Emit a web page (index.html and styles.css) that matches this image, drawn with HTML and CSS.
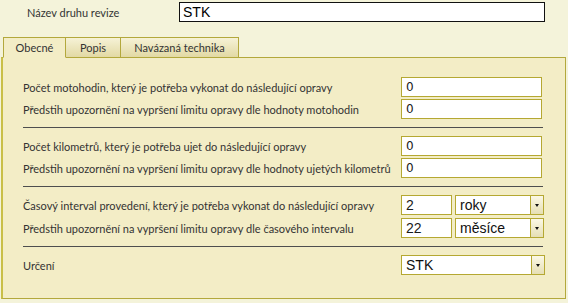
FILE: index.html
```html
<!DOCTYPE html>
<html lang="cs">
<head>
<meta charset="utf-8">
<link rel="stylesheet" href="styles.css">
</head>
<body>
<div class="header">
  <span class="header-label">Název druhu revize</span>
  <div class="name-input">STK</div>
</div>
<div class="tabs">
  <div class="tab active t1">Obecné</div>
  <div class="tab t2">Popis</div>
  <div class="tab t3">Navázaná technika</div>
</div>
<div class="panel">
  <div class="group g1">
    <div class="row"><span class="label">Počet motohodin, který je potřeba vykonat do následující opravy</span><div class="field num">0</div></div>
    <div class="row"><span class="label">Předstih upozornění na vypršení limitu opravy dle hodnoty motohodin</span><div class="field num">0</div></div>
  </div>
  <div class="sep"></div>
  <div class="group g2">
    <div class="row"><span class="label">Počet kilometrů, který je potřeba ujet do následující opravy</span><div class="field num">0</div></div>
    <div class="row"><span class="label">Předstih upozornění na vypršení limitu opravy dle hodnoty ujetých kilometrů</span><div class="field num">0</div></div>
  </div>
  <div class="sep"></div>
  <div class="group g3">
    <div class="row"><span class="label">Časový interval provedení, který je potřeba vykonat do následující opravy</span>
      <div class="pair"><div class="field small">2</div><div class="select unit"><span class="val">roky</span><span class="btn"><i></i></span></div></div></div>
    <div class="row"><span class="label">Předstih upozornění na vypršení limitu opravy dle časového intervalu</span>
      <div class="pair"><div class="field small">22</div><div class="select unit"><span class="val">měsíce</span><span class="btn"><i></i></span></div></div></div>
  </div>
  <div class="sep"></div>
  <div class="group g4">
    <div class="row"><span class="label">Určení</span><div class="select wide"><span class="val">STK</span><span class="btn"><i></i></span></div></div>
  </div>
</div>
</body>
</html>
```
FILE: styles.css
```css
html, body { margin: 0; padding: 0; }
body {
  width: 568px; height: 303px; overflow: hidden;
  background: #f4f3da;
  font-family: Lato, "Open Sans", sans-serif;
  font-size: 11px;
  color: #333;
}
.header { display: flex; align-items: center; height: 20px; padding-top: 2px; }
.header-label { width: 152px; padding-left: 27px; }
.name-input {
  box-sizing: border-box; width: 366px; height: 20px;
  border: 1px solid #111; background: #fff;
  font-family: "Liberation Sans", Arial, sans-serif; font-size: 14px;
  line-height: 18px; padding-left: 3px; color: #000;
}
.tabs { display: flex; margin-top: 15px; padding-left: 3px; height: 21px; }
.tab {
  box-sizing: border-box; height: 21px; line-height: 20px; text-align: center;
  border: 1px solid #b3a83c; border-left: none; border-bottom: 1px solid #b3a83c;
  background: linear-gradient(#f6f2d6, #e2d9a4);
  color: #333;
}
.t1 { width: 63px; border-left: 1px solid #b3a83c; }
.t2 { width: 55px; }
.t3 { width: 118px; }
.tab.active { background: #f3edc6; border-bottom: 1px solid #f3edc6; position: relative; z-index: 1; }
.panel {
  box-sizing: border-box; margin-left: 1px; width: 565px; height: 242px;
  margin-top: -1px;
  border: 1px solid #b3a83c; border-left: 2px solid #c9bf48;
  background: #f3edc6;
  padding: 19px 0 0 20px;
}
.row { display: flex; align-items: center; height: 20px; }
.row + .row { margin-top: 2px; }
.g3 .row + .row { margin-top: 3px; }
.label { width: 378px; white-space: nowrap; }
.sep { width: 520px; height: 0; border-top: 1px solid #4e4e4e; margin: 8px 0 8px; }
.g3 { margin-top: 3px; }
.g4 { margin-top: 4px; }
.field {
  box-sizing: border-box; height: 20px; background: #fff;
  border: 1px solid #b5a832; padding-left: 4px; color: #1a1a1a;
}
.num { width: 141px; font-family: "DejaVu Sans", Verdana, sans-serif; font-size: 12px; line-height: 18px; }
.pair { display: flex; gap: 3px; }
.small { width: 51px; font-family: "Liberation Sans", Arial, sans-serif; font-size: 14px; line-height: 18px; }
.select {
  box-sizing: border-box; height: 20px; display: flex; background: #fff;
  border: 1px solid #b5a832;
  font-family: "Liberation Sans", Arial, sans-serif; font-size: 14px; color: #111;
}
.select .val { flex: 1; padding-left: 4px; line-height: 18px; }
.select .btn {
  width: 12px; border-left: 1px solid #b5a832;
  background: linear-gradient(#fbf8e6, #e6dfb4);
  display: flex; align-items: center; justify-content: center;
}
.select .btn i {
  width: 0; height: 0; border-left: 2.5px solid transparent; border-right: 2.5px solid transparent;
  border-top: 3px solid #111;
}
.unit { width: 89px; }
.wide { width: 144px; }
```
